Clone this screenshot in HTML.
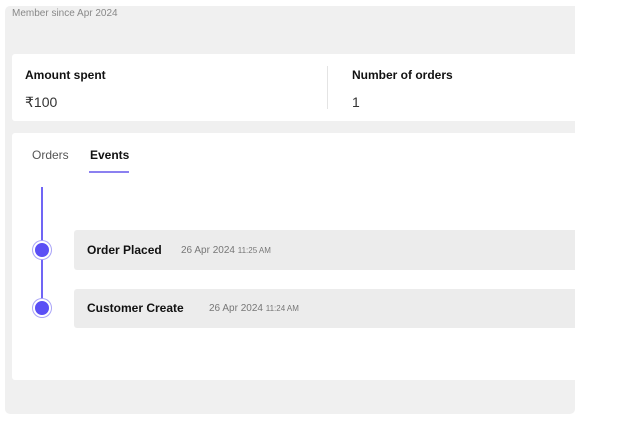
<!DOCTYPE html><html><head><style>
body{margin:0;width:620px;height:421px;background:#fff;font-family:"Liberation Sans",sans-serif;position:relative;overflow:hidden}
.a{position:absolute}
</style></head><body>
<div class="a" style="left:5px;top:6px;width:570px;height:408px;background:#f0f0f0;border-radius:5px 0 5px 5px"></div>
<div class="a" style="left:12px;top:8px;font-size:10px;color:#888">Member since Apr 2024</div>
<div class="a" style="left:12px;top:54px;width:563px;height:67px;background:#fff;border-radius:3px 0 0 3px"></div>
<div class="a" style="left:25px;top:68px;font-size:12px;font-weight:bold;color:#111">Amount spent</div>
<div class="a" style="left:25px;top:94px;font-size:14px;color:#333">₹100</div>
<div class="a" style="left:327px;top:66px;width:1px;height:43px;background:#e4e4e4"></div>
<div class="a" style="left:352px;top:68px;font-size:12px;font-weight:bold;color:#111">Number of orders</div>
<div class="a" style="left:352px;top:94px;font-size:14px;color:#333">1</div>
<div class="a" style="left:12px;top:133px;width:563px;height:247px;background:#fff;border-radius:3px 0 0 3px"></div>
<div class="a" style="left:32px;top:148px;font-size:12px;color:#555">Orders</div>
<div class="a" style="left:90px;top:148px;font-size:12px;font-weight:bold;color:#111">Events</div>
<div class="a" style="left:89px;top:171px;width:40px;height:2px;background:#8b80f0"></div>
<div class="a" style="left:41px;top:187px;width:2px;height:121px;background:#7065f5"></div>
<div class="a" style="left:33px;top:241px;width:14px;height:14px;border-radius:50%;background:#5b4ff5;border:2px solid #fff;box-shadow:0 0 0 1px #a9a3f8"></div>
<div class="a" style="left:33px;top:299px;width:14px;height:14px;border-radius:50%;background:#5b4ff5;border:2px solid #fff;box-shadow:0 0 0 1px #a9a3f8"></div>
<div class="a" style="left:74px;top:230px;width:501px;height:40px;background:#ececec;border-radius:3px 0 0 3px"></div>
<div class="a" style="left:87px;top:243px;font-size:12px;font-weight:bold;color:#111">Order Placed</div>
<div class="a" style="left:181px;top:245px;font-size:10px;color:#777">26 Apr 2024 <span style="font-size:8px">11:25 AM</span></div>
<div class="a" style="left:74px;top:289px;width:501px;height:39px;background:#ececec;border-radius:3px 0 0 3px"></div>
<div class="a" style="left:87px;top:301px;font-size:12px;font-weight:bold;color:#111">Customer Create</div>
<div class="a" style="left:209px;top:303px;font-size:10px;color:#777">26 Apr 2024 <span style="font-size:8px">11:24 AM</span></div>
</body></html>
